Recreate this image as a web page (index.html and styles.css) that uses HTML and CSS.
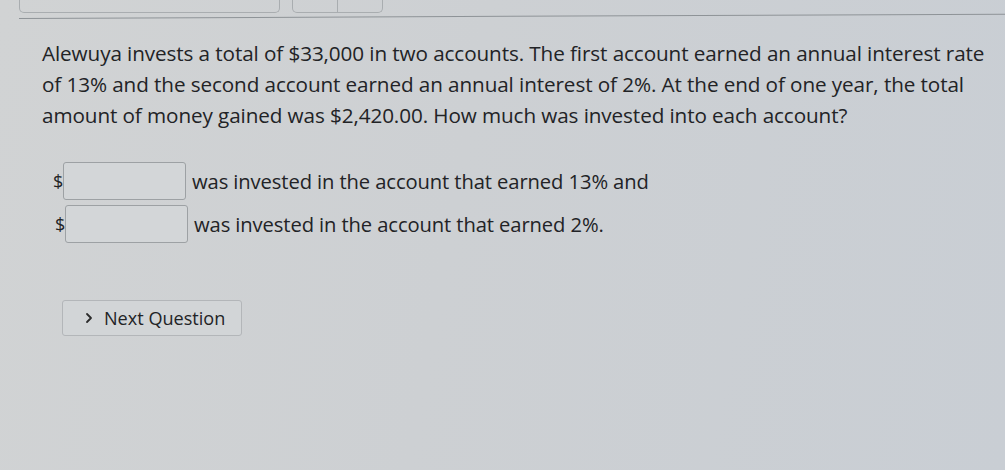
FILE: index.html
```html
<!DOCTYPE html>
<html>
<head>
<meta charset="utf-8">
<link rel="stylesheet" href="styles.css">
</head>
<body>
<div class="page">
  <div class="topbar">
    <div class="tab wide"></div>
    <div class="tab pair"><span></span><span></span></div>
  </div>
  <div class="rule"></div>
  <p class="question">Alewuya invests a total of $33,000 in two accounts. The first account earned an annual interest rate<br>of 13% and the second account earned an annual interest of 2%. At the end of one year, the total<br>amount of money gained was $2,420.00. How much was invested into each account?</p>
  <div class="answers">
    <div class="row"><span class="dollar">$</span><input class="box" type="text"><span class="label">was invested in the account that earned 13% and</span></div>
    <div class="row second"><span class="dollar">$</span><input class="box" type="text"><span class="label">was invested in the account that earned 2%.</span></div>
  </div>
  <button class="next"><svg width="12" height="12" viewBox="0 0 12 12"><path d="M4 2 L8 6 L4 10" fill="none" stroke="#2b2b2b" stroke-width="1.8" stroke-linecap="round" stroke-linejoin="round"/></svg><span>Next Question</span></button>
</div>
</body>
</html>
```
FILE: styles.css
```css
html, body {
  margin: 0;
  padding: 0;
}
body {
  width: 1005px;
  height: 470px;
  overflow: hidden;
  background: linear-gradient(100deg, #d1d3d4 0%, #cdd0d3 45%, #c9ced4 100%);
  font-family: "Open Sans", "Liberation Sans", sans-serif;
  color: #222326;
}
.page {
  position: relative;
  height: 470px;
}
.topbar {
  display: flex;
  gap: 12px;
  padding-left: 19px;
  height: 14px;
}
.tab {
  height: 13px;
  border: 1px solid #a9adb0;
  border-top: none;
  border-radius: 0 0 5px 5px;
  box-sizing: border-box;
}
.tab.wide {
  width: 261px;
}
.tab.pair {
  width: 91px;
  display: flex;
}
.tab.pair span {
  flex: 1;
}
.tab.pair span:first-child {
  border-right: 1px solid #a9adb0;
}
.rule {
  margin: 4px 0 0 19px;
  height: 1px;
  background: #8e9397;
  transform: rotate(-0.25deg);
  transform-origin: left center;
}
.question {
  margin: 19px 0 0 42px;
  font-size: 20.7px;
  line-height: 31px;
  letter-spacing: -0.1px;
  white-space: nowrap;
}
.answers {
  margin-top: 31px;
  display: flex;
  flex-direction: column;
  gap: 5px;
}
.row {
  display: flex;
  align-items: center;
  padding-left: 53px;
}
.row.second {
  padding-left: 55px;
}
.dollar {
  font-size: 18px;
  width: 10px;
}
.box {
  width: 123px;
  height: 38px;
  box-sizing: border-box;
  margin: 0;
  border: 1px solid #9da1a4;
  border-radius: 3px;
  background: #d3d6d8;
  padding: 0;
}
.label {
  margin-left: 6px;
  font-size: 20.2px;
  letter-spacing: -0.1px;
}
.next {
  margin: 57px 0 0 62px;
  width: 180px;
  height: 36px;
  display: flex;
  align-items: center;
  gap: 9px;
  padding: 0 0 0 20px;
  border: 1px solid #b3b6b9;
  border-radius: 3px;
  background: #d2d5d7;
  font-family: "Open Sans", "Liberation Sans", sans-serif;
  font-size: 18.1px;
  color: #222326;
}
```
